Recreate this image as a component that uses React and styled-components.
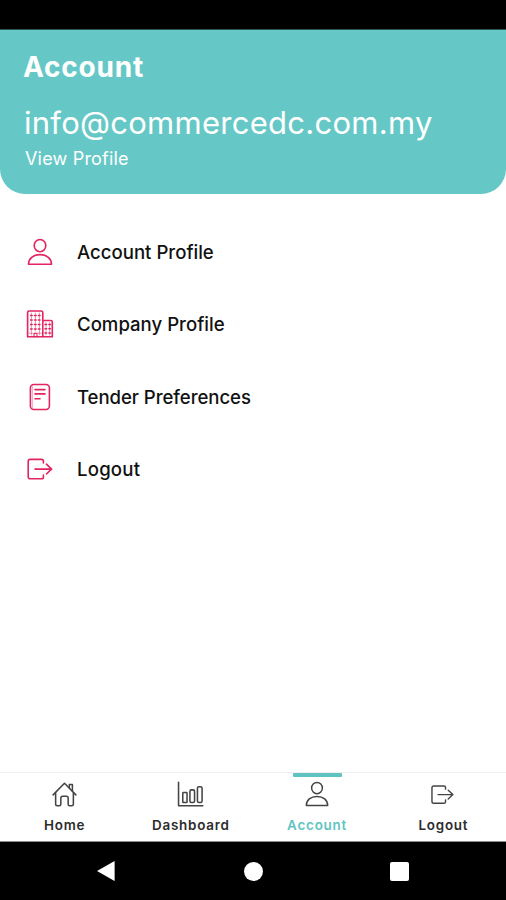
import React, { useState } from 'react';
import styled, { createGlobalStyle } from 'styled-components';

const UserIcon = ({ size }) => (
  <Icon $w={size} viewBox='0 0 28 28'>
    <ellipse cx='14' cy='7.6' rx='5.8' ry='6.1' />
    <path d='M2.5 26.3C2.5 20.5 7.2 16.6 14 16.6S25.5 20.5 25.5 26.3Z' />
  </Icon>
);

const CompanyIcon = ({ size }) => (
  <Icon $w={size} viewBox='0 0 28 28'>
    <path d='M1.6 26.6V2.6Q1.6 1 3.2 1H15.2Q16.8 1 16.8 2.6V26.6' />
    <path d='M17 10.5H24.8Q26.3 10.5 26.3 12V26.6' />
    <path d='M1.6 26.8H26.3' />
    <path d='M8 27V23.4H11V27' strokeWidth='1.1' />
    <g strokeWidth='1.5' strokeDasharray='1.6 2.3'>
      <path d='M4.6 5.5H15.5M4.6 10H15.5M4.6 14.5H15.5M4.6 19H15.5' />
      <path d='M19 14.5H25.5M19 18.7H25.5M19 23H25.5' />
    </g>
    <path
      d='M5.4 3V25M9.4 3V21M13.4 3V25M20 12.5V25M23.6 12.5V25M3 23.2H7M12 23.2H16'
      strokeWidth='0.5'
    />
  </Icon>
);

const TenderIcon = ({ size }) => (
  <Icon $w={size} viewBox='0 0 28 28'>
    <rect x='4.4' y='1.5' width='19' height='25' rx='3.4' />
    <path d='M9 6.6H19M9 10.9H19M9 15.7H14' />
    <path d='M6.6 3.5V24.5' strokeWidth='0.4' />
  </Icon>
);

const LogoutIcon = ({ size }) => (
  <Icon $w={size} viewBox='0 0 28 28'>
    <path d='M17.4 8V6.2Q17.4 4.4 15.6 4.4H4.2Q2.2 4.4 2.2 6.4V21.8Q2.2 23.8 4.2 23.8H15.6Q17.4 23.8 17.4 22V20' />
    <path d='M9 14.1H25.6M20.4 9.2L25.6 14.1L20.4 19' />
  </Icon>
);

const HomeIcon = ({ size }) => (
  <Icon $w={size} viewBox='0 0 28 28'>
    <path d='M2.2 14.4L14 2.4L25.8 14.4' />
    <path d='M19 7V3.6H22.2V10.4' />
    <path d='M4.8 12.4V23.8Q4.8 25.6 6.6 25.6H8.6Q10.2 25.6 10.2 24V17.6Q10.2 15.8 12 15.8H16Q17.8 15.8 17.8 17.6V24Q17.8 25.6 19.4 25.6H21.4Q23.2 25.6 23.2 23.8V12.4' />
  </Icon>
);

const DashboardIcon = ({ size }) => (
  <Icon $w={size} viewBox='0 0 28 28'>
    <path d='M1.6 1.4V25.6H26.8' />
    <rect x='6' y='12' width='4.4' height='10.4' rx='0.6' />
    <rect x='13.4' y='9.2' width='4.8' height='13.2' rx='1.6' />
    <rect x='21.2' y='6' width='4.8' height='16.4' rx='1.6' />
  </Icon>
);

const menuItems = [
  { label: 'Account Profile', icon: UserIcon, spacing: 0 },
  { label: 'Company Profile', icon: CompanyIcon, spacing: 0 },
  { label: 'Tender Preferences', icon: TenderIcon, spacing: -0.07 },
  { label: 'Logout', icon: LogoutIcon, spacing: 0.2 }
];

const tabs = [
  { label: 'Home', icon: HomeIcon, size: 27 },
  { label: 'Dashboard', icon: DashboardIcon, size: 27 },
  { label: 'Account', icon: UserIcon, size: 26 },
  { label: 'Logout', icon: LogoutIcon, size: 25 }
];

const App = () => {
  const [active, setActive] = useState('Account');

  return (
    <Screen>
      <GlobalStyle />
      <StatusBar />
      <Header>
        <Title>Account</Title>
        <Email>info@commercedc.com.my</Email>
        <ViewProfile>View Profile</ViewProfile>
      </Header>

      <Menu>
        {menuItems.map(({ label, icon: ItemIcon, spacing }) => (
          <MenuItem key={label}>
            <ItemIcon size={28} />
            <MenuLabel $spacing={spacing}>{label}</MenuLabel>
          </MenuItem>
        ))}
      </Menu>

      <TabBar>
        {tabs.map(({ label, icon: TabIcon, size }) => (
          <Tab key={label} onClick={() => setActive(label)}>
            <Indicator $active={active === label} />
            <TabIconBox>
              <TabIcon size={size} />
            </TabIconBox>
            <TabLabel $active={active === label}>{label}</TabLabel>
          </Tab>
        ))}
      </TabBar>

      <SystemBar>
        <SystemKey>
          <svg width='20' height='22' viewBox='0 0 20 22'>
            <path d='M0 11L17.6 1V21Z' fill='#fff' />
          </svg>
        </SystemKey>
        <SystemKey>
          <RoundKey />
        </SystemKey>
        <SystemKey>
          <SquareKey />
        </SystemKey>
      </SystemBar>
    </Screen>
  );
};

const GlobalStyle = createGlobalStyle`
  body {
    margin: 0;
    background: #fff;
    font-family: Inter, "Liberation Sans", sans-serif;
  }

  * {
    box-sizing: border-box;
  }
`;

const Screen = styled.div`
  display: flex;
  flex-direction: column;
  height: 900px;
  overflow: hidden;
  background: #fff;
`;

const StatusBar = styled.div`
  height: 30px;
  flex: none;
  background: #000;
  border-bottom: 1px solid #2b5654;
`;

const Header = styled.header`
  height: 164px;
  flex: none;
  padding: 19px 25px 0;
  border-radius: 0 0 25px 25px;
  background: #66c8c6;
  color: #fff;
  white-space: nowrap;
`;

const Title = styled.h1`
  margin: 0 0 0 -2px;
  font-size: 28px;
  line-height: 36px;
  font-weight: 700;
  letter-spacing: 0.8px;
`;

const Email = styled.div`
  margin: 18px 0 0 -1px;
  font-size: 31px;
  line-height: 40px;
  font-weight: 400;
  letter-spacing: 0.27px;
`;

const ViewProfile = styled.div`
  margin-top: 4px;
  font-size: 18px;
  line-height: 24px;
  font-weight: 400;
  letter-spacing: 0.2px;
`;

const Menu = styled.div`
  flex: 1;
  padding: 21.6px 26px 0;
`;

const MenuItem = styled.div`
  display: flex;
  align-items: center;
  gap: 23px;
  height: 72.4px;
  color: #e22560;
  cursor: pointer;
`;

const MenuLabel = styled.span`
  color: #111;
  font-size: 18.6px;
  font-weight: 500;
  letter-spacing: ${(p) => p.$spacing}px;
`;

const Icon = styled.svg`
  display: block;
  flex: none;
  width: ${(p) => p.$w}px;
  height: ${(p) => p.$w}px;
  fill: none;
  stroke: currentColor;
  stroke-width: 1.6;
  stroke-linecap: round;
  stroke-linejoin: round;
`;

const TabBar = styled.nav`
  display: flex;
  flex: none;
  height: 70px;
  padding-left: 1px;
  border-top: 1px solid #efefef;
  border-bottom: 1px solid #8c8f8e;
`;

const Tab = styled.div`
  flex: 1;
  display: flex;
  flex-direction: column;
  align-items: center;
  cursor: pointer;
`;

const Indicator = styled.div`
  width: 49px;
  height: 4px;
  margin-left: 1px;
  border-radius: 1px;
  background: ${(p) => (p.$active ? '#5fc4c1' : 'transparent')};
`;

const TabIconBox = styled.div`
  display: flex;
  align-items: center;
  height: 34px;
  color: #444;
`;

const TabLabel = styled.span`
  font-size: 13.4px;
  line-height: 20px;
  font-weight: 600;
  letter-spacing: 0.8px;
  margin: 4px -1px 0 0;
  color: ${(p) => (p.$active ? '#5fc4c1' : '#2c2c2c')};
`;

const SystemBar = styled.div`
  display: flex;
  flex: none;
  justify-content: center;
  height: 58px;
  background: #000;
`;

const SystemKey = styled.div`
  display: flex;
  align-items: center;
  justify-content: center;
  width: 146.5px;
`;

const RoundKey = styled.div`
  width: 19px;
  height: 19px;
  border-radius: 50%;
  background: #fff;
`;

const SquareKey = styled.div`
  width: 19px;
  height: 19px;
  border-radius: 2px;
  background: #fff;
`;

export default App;
